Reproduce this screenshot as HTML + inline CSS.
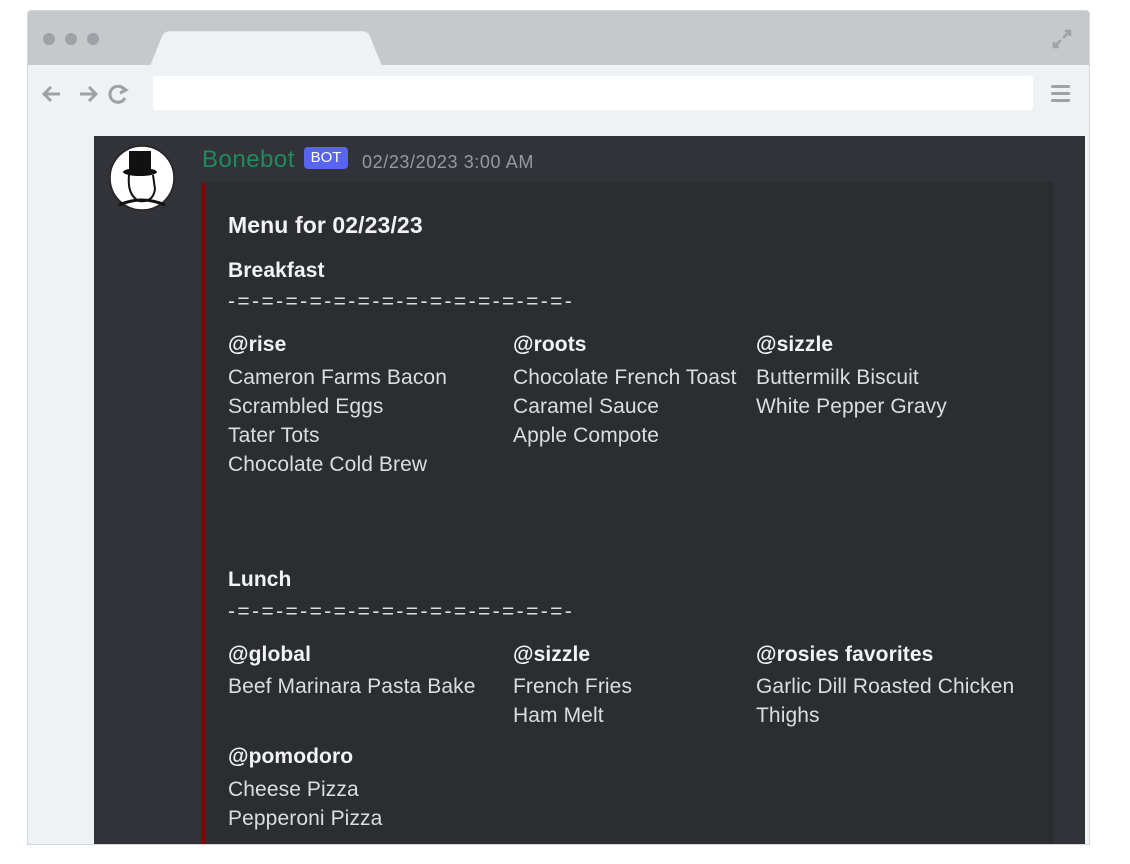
<!DOCTYPE html>
<html><head><style>
*{margin:0;padding:0;box-sizing:border-box}
body{width:1130px;height:864px;background:#fff;position:relative;overflow:hidden;font-family:"Liberation Sans",sans-serif}
.frame{position:absolute;left:27px;top:10px;width:1063px;height:835px;background:#eef2f5;border:1px solid #d5d8db;border-radius:4px 4px 0 0;overflow:hidden}
.tabbar{position:absolute;left:0;top:0;width:100%;height:54px;background:#c6c9cc}
.tab{position:absolute;left:122px;top:15px;width:232px;height:40px;background:#eef2f5;border-radius:6px 6px 0 0;transform:perspective(40px) rotateX(8deg);transform-origin:bottom}
.dot{position:absolute;top:22px;width:12px;height:12px;border-radius:50%;background:#9ea2a6}
.url{position:absolute;left:125px;top:65px;width:880px;height:34px;background:#fff;border-radius:3px}
.panel{position:absolute;left:94px;top:136px;width:991px;height:708px;background:#313338}
.embed{position:absolute;left:201px;top:182px;width:853px;height:662px;background:#2b2d31;border-left:4px solid #8b0000;border-radius:4px 4px 0 0}
.t{position:absolute;color:#dbdee1;font-size:21px;line-height:29px;white-space:nowrap;letter-spacing:0.1px}
.b{font-weight:bold;color:#f2f3f5}
.d{letter-spacing:2.4px}
</style></head><body>
<div class="frame">
<div class="tabbar"><div class="tab"></div>
<div class="dot" style="left:15px"></div><div class="dot" style="left:37px"></div><div class="dot" style="left:59px"></div>
<svg style="position:absolute;left:1023px;top:17px" width="22" height="22" viewBox="0 0 22 22" fill="none" stroke="#9ea2a6" stroke-width="2.5"><path d="M12 10 L19 3 M14 3 H19 V8 M10 12 L3 19 M3 14 V19 H8"/></svg>
</div>
<svg style="position:absolute;left:12px;top:72px" width="90" height="22" viewBox="0 0 90 22" fill="none" stroke="#9ea2a6" stroke-width="3"><path d="M20 11 H4 M11 4 L4 11 L11 18"/><path d="M40 11 H56 M49 4 L56 11 L49 18"/><path d="M94 6 A8 8 0 1 0 95 15" transform="translate(-10,0)"/><path d="M80 3 L86 7 L80 10" /></svg>
<div class="url"></div>
<svg style="position:absolute;left:1023px;top:72px" width="20" height="22"><rect y="2" width="19" height="3" rx="1.5" fill="#9ea2a6"/><rect y="9" width="19" height="3" rx="1.5" fill="#9ea2a6"/><rect y="16" width="19" height="3" rx="1.5" fill="#9ea2a6"/></svg>
</div>
<div class="panel"></div>
<svg style="position:absolute;left:109px;top:145px" width="66" height="66" viewBox="0 0 66 66"><circle cx="33" cy="33" r="32" fill="#fff" stroke="#222" stroke-width="1.5"/><rect x="20" y="6" width="22" height="20" fill="#111"/><ellipse cx="31" cy="27" rx="17" ry="4" fill="#111"/><path d="M20 30 Q18 50 30 56 Q44 58 46 44 L44 30" fill="none" stroke="#111" stroke-width="2"/><path d="M10 60 Q33 50 56 60" fill="none" stroke="#111" stroke-width="3"/></svg>
<div class="t" style="left:202px;top:145px;font-size:24px;color:#1f8b5c;letter-spacing:0.5px">Bonebot</div>
<div style="position:absolute;left:304px;top:147px;width:44px;height:22px;background:#5865f2;border-radius:4px;color:#fff;font-size:15px;line-height:22px;text-align:center">BOT</div>
<div class="t" style="left:362px;top:148px;font-size:18px;color:#949ba4;letter-spacing:0.6px">02/23/2023 3:00 AM</div>
<div class="embed"></div>
<div class="t b" style="left:228px;top:211px;font-size:23px">Menu for 02/23/23</div>
<div class="t b" style="left:228px;top:256px">Breakfast</div>
<div class="t d" style="left:228px;top:287px">-=-=-=-=-=-=-=-=-=-=-=-=-=-=-</div>
<div class="t b" style="left:228px;top:330px">@rise</div>
<div class="t" style="left:228px;top:363px">Cameron Farms Bacon<br>Scrambled Eggs<br>Tater Tots<br>Chocolate Cold Brew</div>
<div class="t b" style="left:513px;top:330px">@roots</div>
<div class="t" style="left:513px;top:363px">Chocolate French Toast<br>Caramel Sauce<br>Apple Compote</div>
<div class="t b" style="left:756px;top:330px">@sizzle</div>
<div class="t" style="left:756px;top:363px">Buttermilk Biscuit<br>White Pepper Gravy</div>
<div class="t b" style="left:228px;top:565px">Lunch</div>
<div class="t d" style="left:228px;top:597px">-=-=-=-=-=-=-=-=-=-=-=-=-=-=-</div>
<div class="t b" style="left:228px;top:640px">@global</div>
<div class="t" style="left:228px;top:672px">Beef Marinara Pasta Bake</div>
<div class="t b" style="left:513px;top:640px">@sizzle</div>
<div class="t" style="left:513px;top:672px">French Fries<br>Ham Melt</div>
<div class="t b" style="left:756px;top:640px">@rosies favorites</div>
<div class="t" style="left:756px;top:672px">Garlic Dill Roasted Chicken<br>Thighs</div>
<div class="t b" style="left:228px;top:742px">@pomodoro</div>
<div class="t" style="left:228px;top:775px">Cheese Pizza<br>Pepperoni Pizza</div>
</body></html>
